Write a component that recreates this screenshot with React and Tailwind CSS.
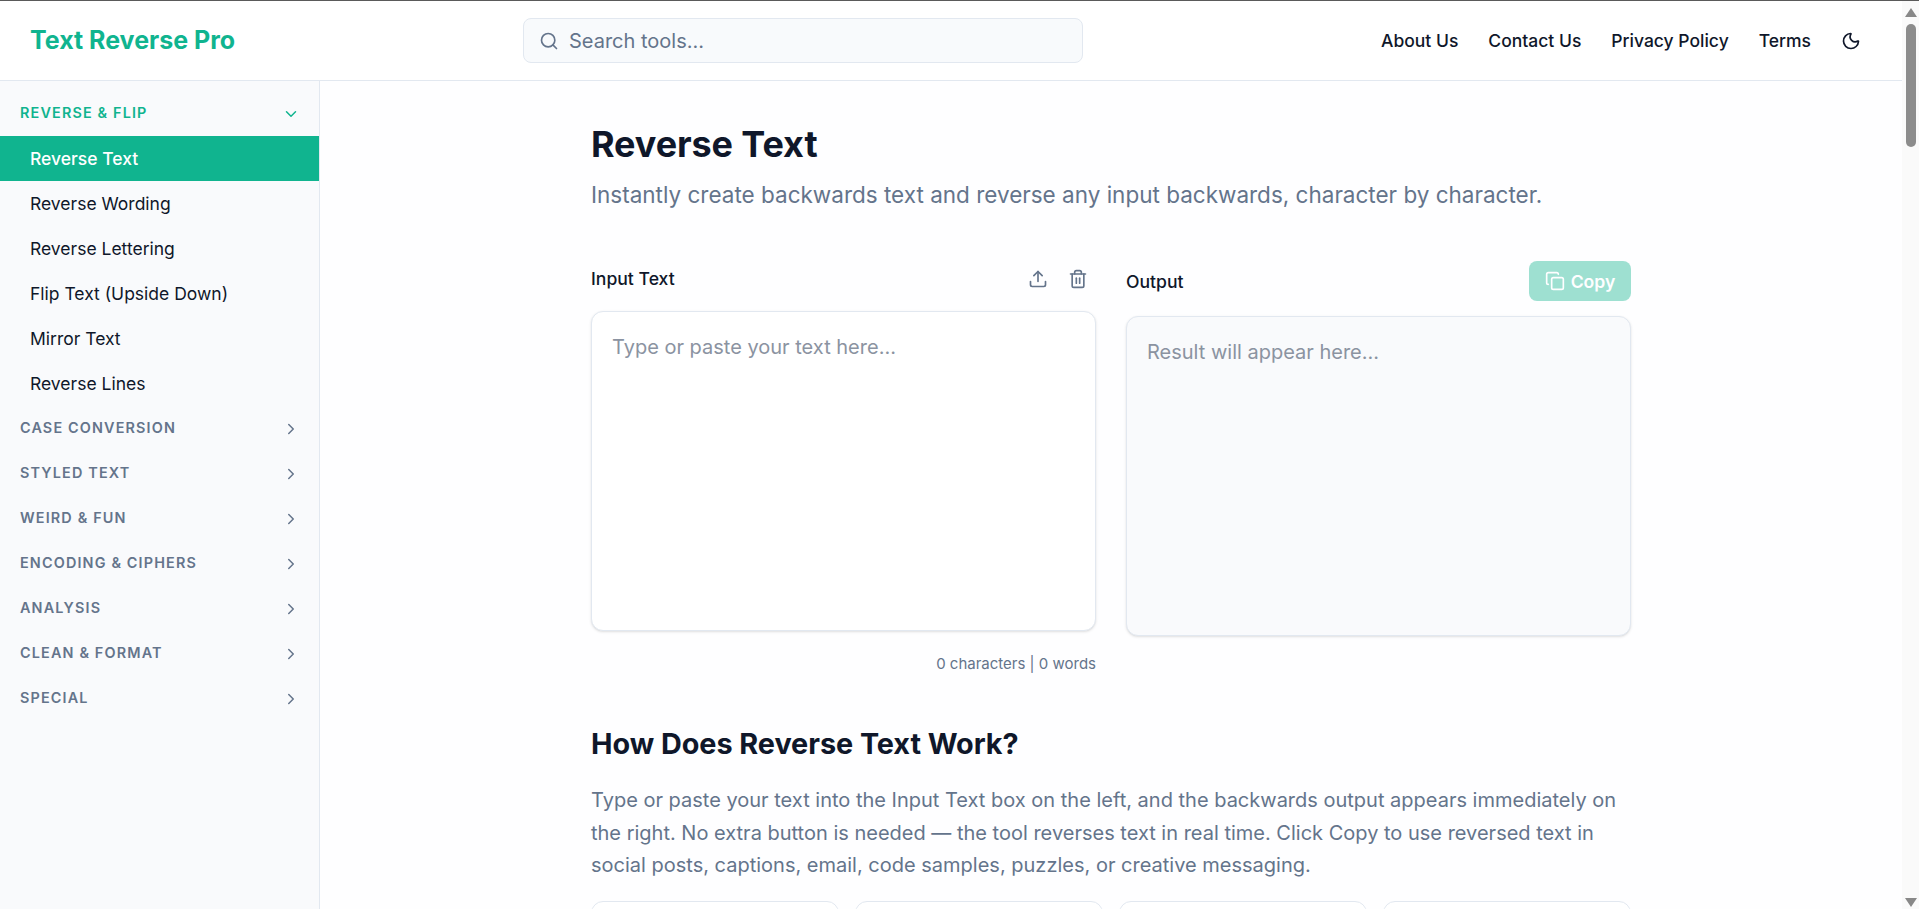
import { Search, Moon, ChevronDown, ChevronRight, Upload, Trash2, Copy } from 'lucide-react';

const NAV_LINKS = ['About Us', 'Contact Us', 'Privacy Policy', 'Terms'];

const REVERSE_TOOLS = [
  'Reverse Text',
  'Reverse Wording',
  'Reverse Lettering',
  'Flip Text (Upside Down)',
  'Mirror Text',
  'Reverse Lines',
];

const GROUPS = [
  'Case Conversion',
  'Styled Text',
  'Weird & Fun',
  'Encoding & Ciphers',
  'Analysis',
  'Clean & Format',
  'Special',
];

function Header() {
  return (
    <header className="h-[80px] shrink-0 flex items-center justify-between bg-white border-b border-[#e2e8f0] pl-[30px] pr-[41px]">
      <div className="text-[25px] font-bold text-[#10b48f] w-[493px]">Text Reverse Pro</div>
      <div className="w-[560px] h-[45px] flex items-center gap-[10px] px-[15px] bg-[#f8fafc] border border-[#e2e8f0] rounded-lg">
        <Search className="w-[20px] h-[20px] text-[#64748b]" strokeWidth={2} />
        <span className="text-[20px] text-[#64748b]">Search tools...</span>
      </div>
      <nav className="ml-auto flex items-center gap-[30px]">
        {NAV_LINKS.map((link) => (
          <a key={link} className="text-[17.5px] font-medium text-[#0f172a] pt-[2px]">
            {link}
          </a>
        ))}
        <Moon className="w-[20px] h-[20px] text-[#0f172a]" strokeWidth={2} />
      </nav>
    </header>
  );
}

function GroupHeader({ label, open }) {
  return (
    <div className="h-[45px] flex items-center justify-between pl-[20px] pr-[19px]">
      <span
        className={`text-[14.4px] font-semibold uppercase tracking-[0.08em] pb-[1px] ${
          open ? 'text-[#10b48f]' : 'text-[#64748b]'
        }`}
      >
        {label}
      </span>
      {open ? (
        <ChevronDown className="w-[18px] h-[18px] text-[#10b48f]" />
      ) : (
        <ChevronRight className="w-[18px] h-[18px] text-[#64748b]" />
      )}
    </div>
  );
}

function Sidebar() {
  return (
    <aside className="w-[320px] shrink-0 bg-[#f9fafc] border-r border-[#e2e8f0] pt-[10px]">
      <GroupHeader label="Reverse & Flip" open />
      {REVERSE_TOOLS.map((tool, i) => (
        <div
          key={tool}
          className={`h-[45px] flex items-center pl-[30px] pt-[2px] text-[17.5px] ${
            i === 0 ? 'bg-[#10b48f] text-white font-medium' : 'text-[#0f172a]'
          }`}
        >
          {tool}
        </div>
      ))}
      {GROUPS.map((group) => (
        <GroupHeader key={group} label={group} />
      ))}
    </aside>
  );
}

function Editor() {
  return (
    <div className="grid grid-cols-2 gap-[30px] mt-[49px]">
      <div>
        <div className="h-[36px] flex items-center justify-between mb-[14px]">
          <span className="text-[17.6px] font-medium text-[#0f172a]">Input Text</span>
          <div className="flex items-center gap-[20px] pr-[8px]">
            <Upload className="w-[20px] h-[20px] text-[#64748b]" />
            <Trash2 className="w-[20px] h-[20px] text-[#64748b]" />
          </div>
        </div>
        <div className="h-[320px] bg-white border border-[#e2e8f0] rounded-xl shadow-sm p-[20px] text-[20px] leading-[30px] text-[#8b93a1]">
          Type or paste your text here...
        </div>
        <div className="mt-[22px] leading-[22px] text-right text-[15px] text-[#64748b]">0 characters | 0 words</div>
      </div>
      <div>
        <div className="h-[40px] flex items-center justify-between mb-[15px]">
          <span className="text-[17.6px] font-medium text-[#0f172a] pt-[2px]">Output</span>
          <button className="h-[40px] w-[102px] flex items-center justify-center gap-[6px] bg-[#10b48f] opacity-40 rounded-lg text-white text-[17.6px] font-semibold">
            <Copy className="w-[20px] h-[20px]" />
            <span className="pt-[2px]">Copy</span>
          </button>
        </div>
        <div className="h-[320px] bg-[#f9fafc] border border-[#e2e8f0] rounded-xl shadow-sm p-[20px] text-[20px] leading-[30px] text-[#8b93a1]">
          Result will appear here...
        </div>
      </div>
    </div>
  );
}

function Main() {
  return (
    <main className="flex-1 min-w-0 bg-[#fefeff] overflow-hidden">
      <div className="w-[1040px] mx-auto pt-[36px]">
        <h1 className="text-[36px] font-bold leading-[54px] tracking-[-0.1px] text-[#0f172a]">Reverse Text</h1>
        <p className="text-[22.5px] text-[#64748b] leading-[34px] mt-[7px]">
          Instantly create backwards text and reverse any input backwards, character by character.
        </p>
        <Editor />
        <h2 className="text-[28.8px] font-bold text-[#0f172a] leading-[44px] tracking-[-0.04px] mt-[47px]">
          How Does Reverse Text Work?
        </h2>
        <p className="text-[20px] leading-[32.5px] text-[#64748b] mt-[18px]">
          Type or paste your text into the Input Text box on the left, and the backwards output appears immediately on
          the right. No extra button is needed — the tool reverses text in real time. Click Copy to use reversed text in
          social posts, captions, email, code samples, puzzles, or creative messaging.
        </p>
        <div className="grid grid-cols-4 gap-[16px] mt-[19.5px]">
          {[0, 1, 2, 3].map((n) => (
            <div key={n} className="h-[120px] bg-white border border-[#e2e8f0] rounded-xl" />
          ))}
        </div>
      </div>
    </main>
  );
}

function Scrollbar() {
  return (
    <div className="w-[17px] shrink-0 bg-[#fafafa] flex flex-col items-center justify-between">
      <div className="w-full flex flex-col items-center">
        <div className="h-[17px] flex items-end justify-center pb-[1px]">
          <div className="w-0 h-0 ml-[1px] border-x-[6px] border-x-transparent border-b-[9px] border-b-[#888888]" />
        </div>
        <div className="w-[10px] h-[123px] mt-[6px] ml-[1px] rounded-full bg-[#8c8c8c]" />
      </div>
      <div className="h-[17px] flex items-end justify-center pb-[2px]">
        <div className="w-0 h-0 ml-[1px] border-x-[6px] border-x-transparent border-t-[9px] border-t-[#888888]" />
      </div>
    </div>
  );
}

export default function App() {
  return (
    <div className="h-[909px] overflow-hidden flex flex-col border-t border-[#5a5a5a] font-['Inter',sans-serif]">
      <div className="flex flex-1 min-h-0">
        <div className="flex-1 min-w-0 flex flex-col">
          <Header />
          <div className="flex flex-1 min-h-0">
            <Sidebar />
            <Main />
          </div>
        </div>
        <Scrollbar />
      </div>
    </div>
  );
}
